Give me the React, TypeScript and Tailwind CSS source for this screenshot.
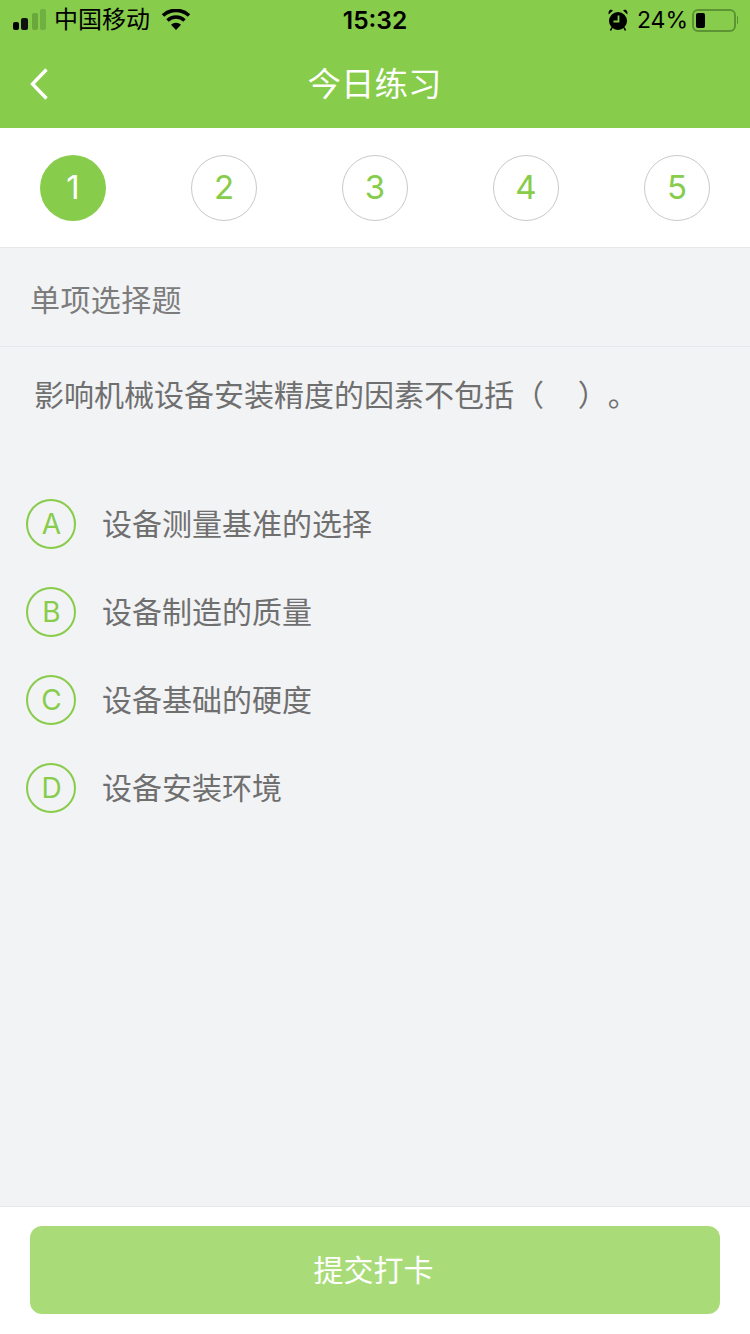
const CJK = "font-['Inter','Noto_Sans_CJK_SC',sans-serif]";

function Signal() {
  return (
    <svg width="34" height="22" viewBox="0 0 34 22" className="block">
      <rect x="0" y="13" width="6" height="8" rx="2" fill="#000" />
      <rect x="8" y="9" width="7" height="12" rx="2" fill="#111" />
      <rect x="19" y="4" width="6" height="17" rx="2" fill="#6aa83c" />
      <rect x="27" y="0" width="6" height="21" rx="2" fill="#6fb043" />
    </svg>
  );
}

function Wifi() {
  return (
    <svg width="30" height="22" viewBox="0 0 30 22" className="block">
      <path d="M15 21 L10 15.8 A7 7 0 0 1 20 15.8 Z" fill="#000" />
      <path d="M6.5 11.5 A12 12 0 0 1 23.5 11.5" stroke="#000" strokeWidth="3.4" fill="none" />
      <path d="M2 6.5 A19 19 0 0 1 28 6.5" stroke="#000" strokeWidth="3.6" fill="none" />
    </svg>
  );
}

function Alarm() {
  return (
    <svg width="20" height="22" viewBox="0 0 20 22" className="block">
      <circle cx="10" cy="12" r="9" fill="#000" />
      <path d="M10.5 6.5 V12.5 H5.5" stroke="#87cc4a" strokeWidth="1.8" fill="none" />
      <path d="M0.6 5.5 L5 1.6 L2.8 0.6 Q0 1.8 0.6 5.5Z M19.4 5.5 L15 1.6 L17.2 0.6 Q20 1.8 19.4 5.5Z" fill="#000" />
      <path d="M4 18.5 L2.5 21.5 M16 18.5 L17.5 21.5" stroke="#000" strokeWidth="1.6" />
    </svg>
  );
}

function Battery() {
  return (
    <div className="flex items-center gap-[1px]">
      <div className="w-[44px] h-[23px] rounded-[6px] border-2 border-[#5c9434] p-[2px] flex">
        <div className="w-[9px] h-full rounded-[2px] bg-black" />
      </div>
      <div className="w-[1px] h-[8px] rounded-r-[2px] bg-[#5c9434]" />
    </div>
  );
}

function StatusBar() {
  return (
    <div className="relative h-[40px] flex items-center justify-between pl-[13px] pr-[12px] text-black">
      <div className="flex items-center">
        <Signal />
        <span className="ml-[7px] text-[24px] leading-[40px]">中国移动</span>
        <span className="ml-[11px]"><Wifi /></span>
      </div>
      <span className="absolute left-0 right-0 text-center text-[24.5px] font-semibold leading-[40px]">15:32</span>
      <div className="flex items-center">
        <Alarm />
        <span className="ml-[9px] text-[23px] leading-[40px]">24%</span>
        <span className="ml-[4px]"><Battery /></span>
      </div>
    </div>
  );
}

function Header() {
  return (
    <div className="bg-[#87cc4a] h-[128px]">
      <StatusBar />
      <div className="relative h-[88px] flex items-start justify-center">
        <svg width="24" height="36" viewBox="0 0 24 36" className="absolute left-[28px] top-[26px]">
          <path d="M18.5 3.5 L4.5 18 L18.5 32.5" stroke="#fff" strokeWidth="3.4" fill="none" />
        </svg>
        <span className="text-white text-[33.5px] leading-[88px] mr-[1px]">今日练习</span>
      </div>
    </div>
  );
}

function Steps() {
  const steps = [1, 2, 3, 4, 5];
  return (
    <div className="bg-white h-[120px] border-b border-[#e6e7ea] flex items-start justify-between px-[40px] pt-[27px]">
      {steps.map((n) =>
        n === 1 ? (
          <div key={n} className="w-[66px] h-[66px] rounded-full bg-[#87cc4a] text-white flex items-center justify-center text-[33px]">
            {n}
          </div>
        ) : (
          <div key={n} className="w-[66px] h-[66px] rounded-full border border-[#c9c9c9] text-[#87cc4a] flex items-center justify-center text-[33px]">
            {n}
          </div>
        )
      )}
    </div>
  );
}

const options = [
  { key: "A", text: "设备测量基准的选择" },
  { key: "B", text: "设备制造的质量" },
  { key: "C", text: "设备基础的硬度" },
  { key: "D", text: "设备安装环境" },
];

function Option({ letter, text }: { letter: string; text: string }) {
  return (
    <div className="h-[88px] flex items-center pl-[26px]">
      <div className="w-[50px] h-[50px] rounded-full border-2 border-[#87cc4a] text-[#87cc4a] flex items-center justify-center text-[28px] pl-[1px]">
        {letter}
      </div>
      <span className="ml-[26px] text-[30px] text-[#6f6f6f]">{text}</span>
    </div>
  );
}

export default function App() {
  return (
    <div className={`w-[750px] h-[1334px] flex flex-col bg-[#f2f3f5] overflow-hidden ${CJK}`}>
      <Header />
      <Steps />
      <div className="h-[99px] border-b border-[#e6e7ea] flex items-center pl-[30px] pt-[7px] text-[30px] tracking-[0.4px] text-[#7c7c7c]">
        单项选择题
      </div>
      <div className="pl-[34px] pt-[25px] text-[30px] leading-[46px] text-[#6f6f6f] whitespace-pre [text-spacing-trim:space-all]">
        影响机械设备安装精度的因素不包括（    ）。
      </div>
      <div className="mt-[62px] flex-1">
        {options.map((o) => (
          <Option key={o.key} letter={o.key} text={o.text} />
        ))}
      </div>
      <div className="h-[128px] bg-white border-t border-[#e6e7ea] px-[30px] pt-[19px]">
        <button className="w-full h-[88px] rounded-[12px] bg-[#a9dc78] text-white text-[30px] pr-[3px]">提交打卡</button>
      </div>
    </div>
  );
}
